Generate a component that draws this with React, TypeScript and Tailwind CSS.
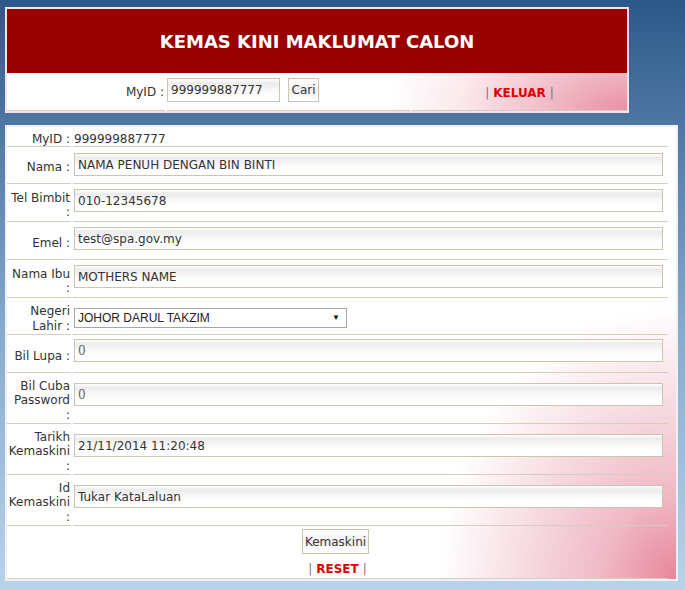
import React from "react";

const lineCls = "border-b border-[#d5cebe]";

function Label({ lines }: { lines: string[] }) {
  return (
    <div className={`w-[64px] shrink-0 flex flex-col items-end justify-center text-right pr-[1px] pt-[5px] leading-[14.5px] whitespace-nowrap ${lineCls}`}>
      {lines.map((l, i) => (
        <span key={i}>{l}</span>
      ))}
    </div>
  );
}

function TextBox({ value, dim }: { value: string; dim?: boolean }) {
  return (
    <input
      readOnly
      defaultValue={value}
      className={`w-[589px] h-[23px] border border-[#cbc4b3] bg-[linear-gradient(to_bottom,#ffffff_0%,#ebebeb_18%,#f7f7f7_45%,#ffffff_70%)] px-[3px] outline-none ${
        dim ? "text-[#666] font-['DejaVu_Serif'] text-[12px]" : "text-[#333] text-[12px]"
      }`}
    />
  );
}

function Row({ h, lines, children, val }: { h: string; lines: string[]; children: React.ReactNode; val: string }) {
  return (
    <div className={`flex gap-[2px] ${h}`}>
      <Label lines={lines} />
      <div className={`flex-1 flex pl-[1px] ${val} ${lineCls}`}>{children}</div>
    </div>
  );
}

export default function App() {
  return (
    <div className="w-[685px] h-[590px] overflow-hidden bg-[linear-gradient(to_bottom,#2c5888_0%,#4c75a2_20%,#86a9cc_55%,#b9d3ea_100%)] font-['DejaVu_Sans',sans-serif] text-[12px] text-[#333] pt-[7px] pl-[5px]">
      {/* Header panel */}
      <div className="w-[624px] border-2 border-[#f3e3e8]">
        <div className="h-[64px] bg-[#990000] flex items-center justify-center">
          <span className="text-white font-bold text-[18px]">KEMAS KINI MAKLUMAT CALON</span>
        </div>
        <div className="h-[38px] flex gap-[2px] bg-[radial-gradient(ellipse_240px_130px_at_100%_100%,#e98fa4_0%,#f3c3ce_40%,#fbe9ed_70%,#ffffff_100%)]">
          <div className={`w-[158px] flex items-center justify-end pr-[1px] pt-[1px] ${lineCls}`}>MyID :</div>
          <div className={`w-[243px] flex items-center pb-[3px] ${lineCls}`}>
            <input
              readOnly
              defaultValue="999999887777"
              className="w-[113px] h-[24px] border border-[#cbc4b3] bg-[linear-gradient(to_bottom,#ffffff_0%,#ececec_20%,#ffffff_70%)] px-[3px] text-[12px] text-[#333] outline-none"
            />
            <button className="ml-[8px] w-[31px] h-[24px] border border-[#cbc4b3] bg-[linear-gradient(to_bottom,#ffffff_0%,#f0f0f0_50%,#ffffff_100%)] text-[12px] text-[#333]">
              Cari
            </button>
          </div>
          <div className={`flex-1 flex items-center justify-center pt-[3px] ${lineCls}`}>
            <span className="text-[#777]">|</span>
            <span className="mx-[4px] font-bold text-[#e00000]">KELUAR</span>
            <span className="text-[#777]">|</span>
          </div>
        </div>
      </div>

      {/* Main panel */}
      <div className="mt-[12px] w-[673px] h-[456px] border-2 border-[#eef2f7] bg-[radial-gradient(ellipse_270px_310px_at_100%_100%,#e7869b_0%,#f0b8c5_27%,#f7dde3_58%,#ffffff_88%)] pr-[8px]">
        <Row h="h-[20px]" lines={["MyID :"]} val="items-center pt-[5px]">
          <span>999999887777</span>
        </Row>
        <Row h="h-[37px]" lines={["Nama :"]} val="items-start pt-[6px]">
          <TextBox value="NAMA PENUH DENGAN BIN BINTI" />
        </Row>
        <Row h="h-[38px]" lines={["Tel Bimbit", ":"]} val="items-start pt-[5px]">
          <TextBox value="010-12345678" />
        </Row>
        <Row h="h-[38px]" lines={["Emel :"]} val="items-start pt-[5px]">
          <TextBox value="test@spa.gov.my" />
        </Row>
        <Row h="h-[38px]" lines={["Nama Ibu", ":"]} val="items-start pt-[5px]">
          <TextBox value="MOTHERS NAME" />
        </Row>
        <Row h="h-[37px]" lines={["Negeri", "Lahir :"]} val="items-start pt-[10px]">
          <div className="w-[273px] h-[20px] border border-[#a6a6a6] bg-white flex items-center justify-between pl-[3px] pr-[6px] font-['Liberation_Sans',sans-serif] text-[12px] text-[#222]">
            <span>JOHOR DARUL TAKZIM</span>
            <span className="text-[8px] text-[#111]">▼</span>
          </div>
        </Row>
        <Row h="h-[38px]" lines={["Bil Lupa :"]} val="items-start pt-[4px]">
          <TextBox value="0" dim />
        </Row>
        <Row h="h-[51px]" lines={["Bil Cuba", "Password", ":"]} val="items-start pt-[10px]">
          <TextBox value="0" dim />
        </Row>
        <Row h="h-[51px]" lines={["Tarikh", "Kemaskini", ":"]} val="items-start pt-[10px]">
          <TextBox value="21/11/2014 11:20:48" />
        </Row>
        <Row h="h-[51px]" lines={["Id", "Kemaskini", ":"]} val="items-start pt-[10px]">
          <TextBox value="Tukar KataLaluan" />
        </Row>
        <div className="h-[31px] flex items-center justify-center pr-[4px]">
          <button className="h-[25px] px-[2px] border border-[#cbc4b3] bg-[linear-gradient(to_bottom,#ffffff_0%,#f2f2f2_50%,#ffffff_100%)] text-[12px] text-[#333]">
            Kemaskini
          </button>
        </div>
        <div className={`h-[22px] flex items-center justify-center pt-[2px] ${lineCls}`}>
          <span className="text-[#777]">|</span>
          <span className="mx-[4px] font-bold text-[#e00000]">RESET</span>
          <span className="text-[#777]">|</span>
        </div>
      </div>
    </div>
  );
}
